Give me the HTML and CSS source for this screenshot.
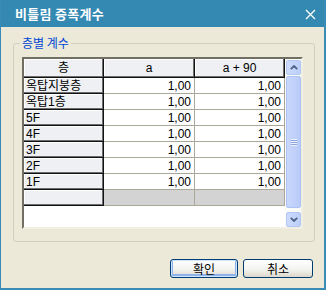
FILE: index.html
```html
<!DOCTYPE html>
<html>
  <head>
    <title>비틀림 증폭계수</title>
    <link rel="stylesheet" href="styles.css">
  </head>
  <body>
    <div class="window">
      <div class="titlebar">
        <span class="title">비틀림 증폭계수</span>
        <svg class="close" width="11" height="11" viewBox="0 0 11 11">
          <path d="M1 1 L10 10 M10 1 L1 10" stroke="#fff" stroke-width="1.3" fill="none"/>
        </svg>
      </div>

      <fieldset class="group">
        <legend>층별 계수</legend>
        <div class="grid">
          <div class="grid-body">
            <table>
              <colgroup>
                <col class="c-head">
                <col class="c-a">
                <col class="c-b">
              </colgroup>
              <thead>
                <tr>
                  <th>층</th>
                  <th>a</th>
                  <th>a + 90</th>
                </tr>
              </thead>
              <tbody>
                <tr><th>옥탑지붕층</th><td>1,00</td><td>1,00</td></tr>
                <tr><th>옥탑1층</th><td>1,00</td><td>1,00</td></tr>
                <tr><th>5F</th><td>1,00</td><td>1,00</td></tr>
                <tr><th>4F</th><td>1,00</td><td>1,00</td></tr>
                <tr><th>3F</th><td>1,00</td><td>1,00</td></tr>
                <tr><th>2F</th><td>1,00</td><td>1,00</td></tr>
                <tr><th>1F</th><td>1,00</td><td>1,00</td></tr>
                <tr class="new-row"><th></th><td></td><td></td></tr>
              </tbody>
            </table>
          </div>
          <!-- vertical scrollbar -->
          <div class="scroll">
            <div class="sb-btn">
              <svg width="8" height="5" viewBox="0 0 8 5"><path d="M0.8 4.2 L4 1 L7.2 4.2" stroke="#4D6185" stroke-width="1.8" fill="none"/></svg>
            </div>
            <div class="thumb"><span class="grip"></span></div>
            <div class="sb-btn">
              <svg width="8" height="5" viewBox="0 0 8 5"><path d="M0.8 0.8 L4 4 L7.2 0.8" stroke="#4D6185" stroke-width="1.8" fill="none"/></svg>
            </div>
          </div>
        </div>
      </fieldset>

      <div class="buttons">
        <button class="btn default">확인</button>
        <button class="btn cancel">취소</button>
      </div>
    </div>
  </body>
</html>
```

FILE: styles.css
```css
body {
  margin: 0;
  padding: 0;
  font-family: "Liberation Sans", "Noto Sans CJK KR", sans-serif;
  font-size: 12px;
  color: #000;
}

.window {
  width: 326px;
  height: 290px;
  box-sizing: border-box;
  background-color: #ECE9D8;
  border-style: solid;
  border-color: #3A8CB6;
  border-width: 0 2px 2px 1px;
}

.titlebar {
  height: 27px;
  background-color: #3489B2;
  display: flex;
  align-items: center;
  justify-content: space-between;
  padding: 0 8px 0 14px;
}

.title {
  color: #fff;
  font-family: "Noto Sans CJK KR", sans-serif;
  font-weight: bold;
  font-size: 13px;
  letter-spacing: 0.3px;
  margin-top: -1px;
}

.close {
  margin-top: 1px;
}

.group {
  width: 302px;
  box-sizing: border-box;
  margin: 9px 0 0 12px;
  padding: 7px 11px 12px 8px;
  border: 1px solid #D0D0BF;
  border-radius: 3px;
}

.group legend {
  color: #0046D5;
  font-family: "Noto Sans CJK KR", sans-serif;
  font-size: 12px;
  line-height: 14px;
  padding: 0 2px;
  margin-left: -2px;
}

.grid {
  display: flex;
  height: 172px;
  box-sizing: border-box;
  border-style: solid;
  border-width: 2px;
  border-color: #716F64 #F1EFE2 #F1EFE2 #716F64;
  background-color: #fff;
}

.grid-body {
  width: 261px;
}

table {
  border-collapse: separate;
  border-spacing: 0;
  table-layout: fixed;
  width: 261px;
}

.c-head { width: 80px; }
.c-a { width: 91px; }
.c-b { width: 90px; }

th,
td {
  box-sizing: border-box;
  height: 16px;
  padding: 0;
  line-height: 14px;
  font-weight: normal;
  white-space: nowrap;
  overflow: hidden;
}

th {
  background-color: #EEF0F4;
  border-right: 1px solid #111;
  border-bottom: 1px solid #111;
  box-shadow: inset -1px -1px #6E6E6E, inset 1px 1px #fff;
  text-align: left;
  padding-left: 2px;
}

thead th {
  height: 19px;
  text-align: center;
  padding-left: 0;
}

td {
  text-align: right;
  padding-right: 3px;
  border-right: 1px solid #ACA899;
  border-bottom: 1px solid #ACA899;
}

.new-row td {
  background-color: #D3D3D3;
}

.scroll {
  width: 16px;
  display: flex;
  flex-direction: column;
  background-color: #FBFBF8;
}

.sb-btn {
  height: 15px;
  margin: 1px 0 0 1px;
  box-sizing: border-box;
  border: 1px solid #B3C7F3;
  border-radius: 2px;
  background: linear-gradient(to right, #CDDAFC, #BCCEF9);
  display: flex;
  align-items: center;
  justify-content: center;
}

.thumb {
  flex: 1;
  margin: 1px 0 3px 1px;
  box-sizing: border-box;
  border: 1px solid #ACC2F5;
  border-radius: 2px;
  background: linear-gradient(to right, #C9D7FC, #B9CBF8);
  display: flex;
  align-items: center;
  justify-content: center;
}

.grip {
  width: 6px;
  height: 7px;
  background: repeating-linear-gradient(#EEF3FF 0, #EEF3FF 1px, #8CA4DD 1px, #8CA4DD 2px);
}

.buttons {
  display: flex;
  justify-content: flex-end;
  gap: 5px;
  margin: 17px 11px 0 0;
}

.btn {
  height: 19px;
  padding: 0;
  box-sizing: border-box;
  border: 1px solid #003C74;
  border-radius: 3px;
  background: linear-gradient(#FFFFFF, #F3F3EF 55%, #DCD7CB);
  font-family: "Noto Sans CJK KR", sans-serif;
  font-size: 12px;
  line-height: 15px;
  color: #000;
}

.default {
  width: 68px;
  box-shadow: inset 0 0 0 1px #CEE7FF, inset 0 -1px 0 2px #8FB2EB;
}

.cancel {
  width: 70px;
}
```
